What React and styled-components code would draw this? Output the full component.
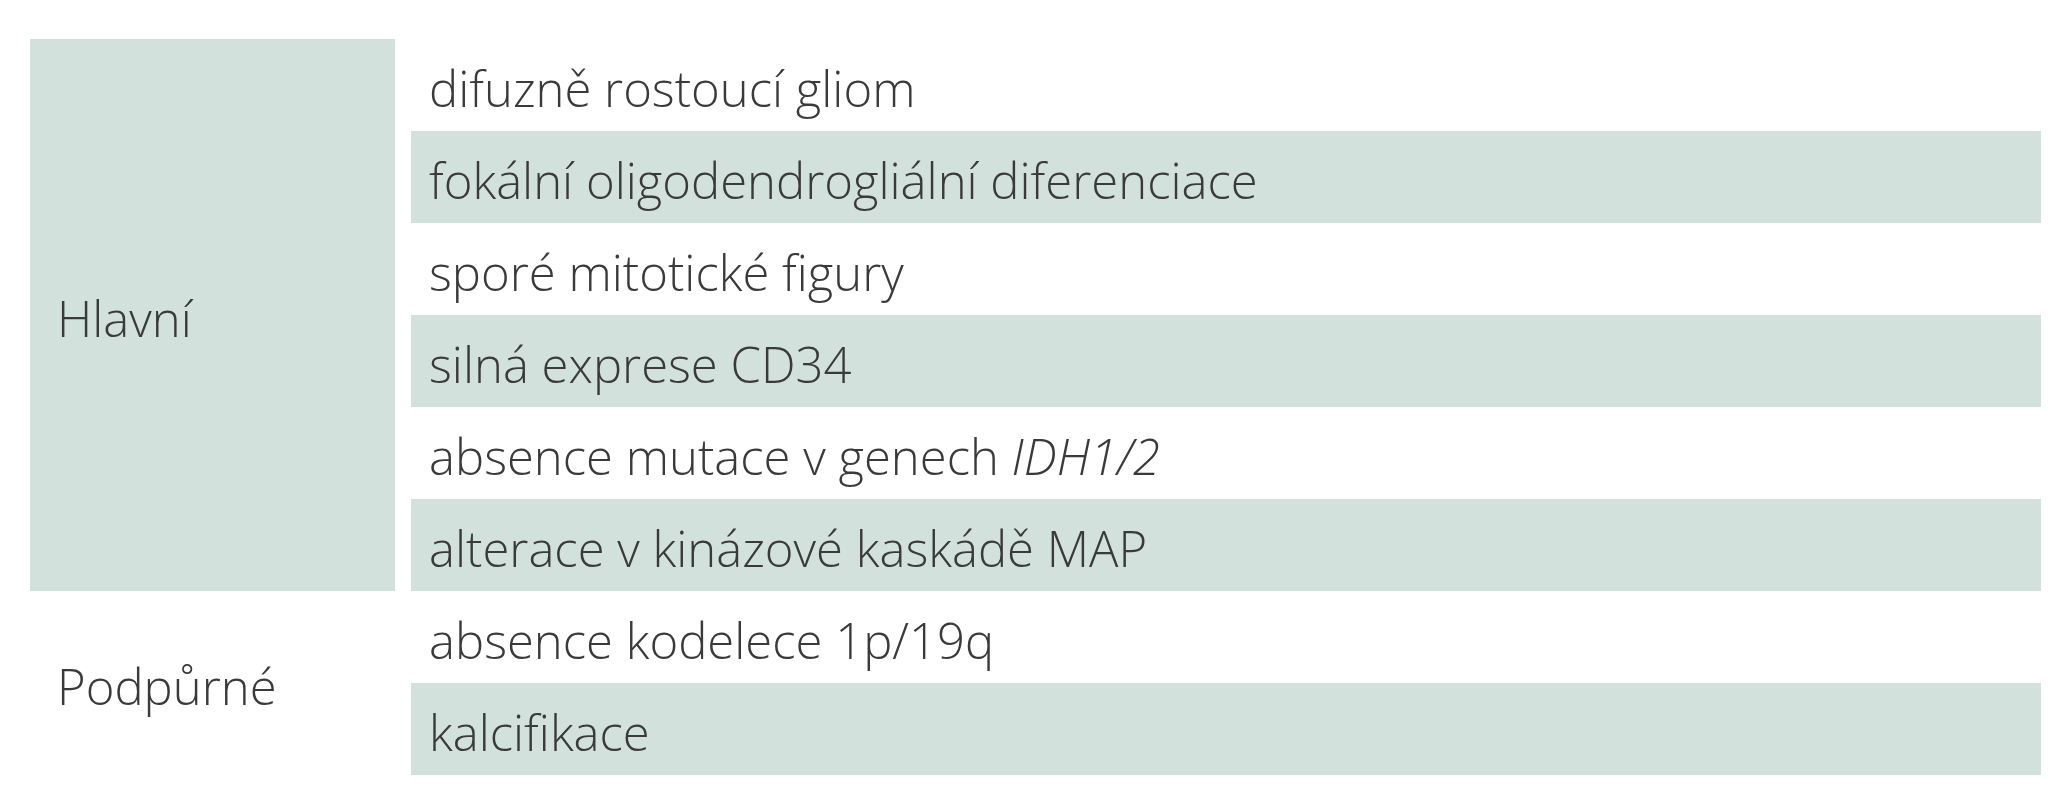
import styled, { createGlobalStyle } from "styled-components";

const GlobalStyle = createGlobalStyle`
  html, body {
    margin: 0;
    padding: 0;
    background: #ffffff;
  }
  body {
    font-family: "Open Sans", "Noto Sans", sans-serif;
    font-weight: 300;
    color: #3a3a3a;
  }
`;

const shade = "#d3e1dd";

const Page = styled.div`
  padding: 39px 24px 24px 30px;
`;

const Table = styled.div`
  display: flex;
  flex-direction: column;
  width: 2011px;
`;

const Group = styled.div`
  display: grid;
  grid-template-columns: 365px 1fr;
  column-gap: 16px;
`;

const Label = styled.div`
  display: flex;
  align-items: center;
  padding: 6px 0 0 27px;
  font-size: 49px;
  background: ${(p) => (p.$shaded ? shade : "transparent")};
`;

const Rows = styled.div`
  display: flex;
  flex-direction: column;
`;

const Row = styled.div`
  display: flex;
  align-items: center;
  height: 92px;
  padding: 6px 0 0 18px;
  box-sizing: border-box;
  font-size: 49px;
  white-space: nowrap;
  background: ${(p) => (p.$shaded ? shade : "transparent")};
`;

const groups = [
  {
    label: "Hlavní",
    shaded: true,
    rows: [
      "difuzně rostoucí gliom",
      "fokální oligodendrogliální diferenciace",
      "sporé mitotické figury",
      "silná exprese CD34",
      <>
        absence mutace v genech&nbsp;<i>IDH1/2</i>
      </>,
      "alterace v kinázové kaskádě MAP",
    ],
  },
  {
    label: "Podpůrné",
    shaded: false,
    rows: ["absence kodelece 1p/19q", "kalcifikace"],
  },
];

export default function App() {
  return (
    <>
      <GlobalStyle />
      <Page>
        <Table>
          {groups.map((g) => (
            <Group key={g.label}>
              <Label $shaded={g.shaded}>{g.label}</Label>
              <Rows>
                {g.rows.map((r, i) => (
                  <Row key={i} $shaded={i % 2 === 1}>
                    {r}
                  </Row>
                ))}
              </Rows>
            </Group>
          ))}
        </Table>
      </Page>
    </>
  );
}
